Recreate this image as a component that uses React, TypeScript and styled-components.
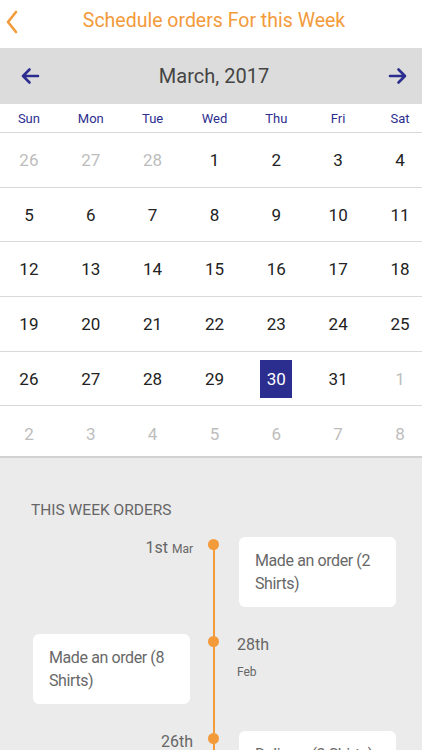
import { FC } from 'react';
import styled, { createGlobalStyle } from 'styled-components';

const GlobalStyle = createGlobalStyle`
  html, body {
    margin: 0;
    padding: 0;
    overflow: hidden;
    background: #ebebeb;
  }
  body {
    font-family: Roboto, 'Liberation Sans', sans-serif;
  }
`;

const ORANGE = '#f39a3b';
const NAVY = '#2c2e8f';

const Page = styled.div`
  display: flex;
  flex-direction: column;
  width: 422px;
  min-height: 100vh;
`;

const Header = styled.header`
  display: flex;
  align-items: center;
  justify-content: center;
  position: relative;
  height: 48px;
  padding-left: 6px;
  background: #fff;
`;

const BackButton = styled.button`
  position: absolute;
  left: 4px;
  top: 9px;
  display: flex;
  padding: 0;
  border: 0;
  background: none;
`;

const Title = styled.h1`
  margin: 0 0 7px;
  font-size: 19.5px;
  font-weight: 400;
  color: ${ORANGE};
`;

const MonthBar = styled.div`
  display: flex;
  align-items: center;
  justify-content: space-between;
  height: 56px;
  padding: 0 14px 0 20px;
  background: #dcdcdc;
`;

const MonthTitle = styled.span`
  font-size: 20px;
  color: #444;
`;

const NavArrow = styled.button`
  display: flex;
  padding: 0;
  border: 0;
  background: none;
`;

const Calendar = styled.div`
  overflow: hidden;
  background: #fff;
  border-bottom: 2px solid #d2d2d2;
`;

const WeekRow = styled.div<{ $height: number; $last?: boolean }>`
  display: grid;
  grid-template-columns: repeat(7, 61.85px);
  align-items: center;
  width: 433px;
  margin-left: -2px;
  height: ${({ $height }) => $height}px;
  border-bottom: ${({ $last }) => ($last ? 'none' : '1px solid #d9d9d9')};
  padding-top: ${({ $last }) => ($last ? 6 : 0)}px;
  box-sizing: ${({ $last }) => ($last ? 'border-box' : 'content-box')};
`;

const DayName = styled.span`
  justify-self: center;
  font-size: 13px;
  color: ${NAVY};
`;

const DayCell = styled.span<{ $muted?: boolean; $selected?: boolean }>`
  justify-self: center;
  display: flex;
  align-items: center;
  justify-content: center;
  width: 32px;
  height: 38px;
  font-size: 17px;
  color: ${({ $muted, $selected }) => ($selected ? '#fff' : $muted ? '#bdbdbd' : '#222')};
  background: ${({ $selected }) => ($selected ? NAVY : 'transparent')};
`;

const OrdersSection = styled.section`
  flex: 1;
  padding: 42px 0 0 31px;
  background: #ebebeb;
`;

const SectionTitle = styled.h2`
  margin: 0 0 17px;
  font-size: 15.5px;
  line-height: 20px;
  font-weight: 400;
  color: #666;
`;

const TimelineRow = styled.div`
  display: grid;
  grid-template-columns: 162px 44px 160px;
  align-items: start;
  min-height: 97px;
`;

const Axis = styled.div<{ $first?: boolean }>`
  position: relative;
  align-self: stretch;

  &::before {
    content: '';
    position: absolute;
    left: 20px;
    width: 2px;
    top: ${({ $first }) => ($first ? 7 : 0)}px;
    bottom: 0;
    background: ${ORANGE};
  }
  &::after {
    content: '';
    position: absolute;
    left: 15px;
    top: 2px;
    width: 11px;
    height: 11px;
    border-radius: 50%;
    background: ${ORANGE};
  }
`;

const DateLabel = styled.div<{ $side: 'left' | 'right' }>`
  text-align: ${({ $side }) => $side};
  color: #666;
`;

const DayNum = styled.span`
  font-size: 16px;
  line-height: 22px;
`;

const MonthShort = styled.span<{ $block?: boolean }>`
  display: ${({ $block }) => ($block ? 'block' : 'inline')};
  margin-top: ${({ $block }) => ($block ? 8 : 0)}px;
  margin-left: ${({ $block }) => ($block ? 0 : 4)}px;
  font-size: 12px;
  line-height: 16px;
`;

const OrderCard = styled.div`
  width: 157px;
  box-sizing: border-box;
  margin-left: 2px;
  padding: 12px 16px;
  border-radius: 6px;
  background: #fff;
  font-size: 16px;
  line-height: 23px;
  letter-spacing: -0.4px;
  color: #686868;
`;

const BackIcon = () => (
  <svg width="16" height="26" viewBox="0 0 16 26">
    <polyline points="12,3 4,13 12,23" fill="none" stroke={ORANGE} strokeWidth="2.6" strokeLinecap="round" strokeLinejoin="round" />
  </svg>
);

const ArrowIcon: FC<{ dir: 'left' | 'right' }> = ({ dir }) => (
  <svg width="20" height="18" viewBox="0 0 20 18" style={dir === 'right' ? { transform: 'scaleX(-1)' } : undefined}>
    <path d="M18 9H3M9.5 2.5L3 9l6.5 6.5" fill="none" stroke={NAVY} strokeWidth="2.6" strokeLinecap="round" strokeLinejoin="round" />
  </svg>
);

type Day = { n: number; muted?: boolean; selected?: boolean };

const weeks: Day[][] = [
  [{ n: 26, muted: true }, { n: 27, muted: true }, { n: 28, muted: true }, { n: 1 }, { n: 2 }, { n: 3 }, { n: 4 }],
  [5, 6, 7, 8, 9, 10, 11].map((n) => ({ n })),
  [12, 13, 14, 15, 16, 17, 18].map((n) => ({ n })),
  [19, 20, 21, 22, 23, 24, 25].map((n) => ({ n })),
  [{ n: 26 }, { n: 27 }, { n: 28 }, { n: 29 }, { n: 30, selected: true }, { n: 31 }, { n: 1, muted: true }],
  [2, 3, 4, 5, 6, 7, 8].map((n) => ({ n, muted: true })),
];

const dayNames = ['Sun', 'Mon', 'Tue', 'Wed', 'Thu', 'Fri', 'Sat'];

type Entry = { day: string; month: string; text: string; side: 'left' | 'right' };

const entries: Entry[] = [
  { day: '1st', month: 'Mar', text: 'Made an order (2 Shirts)', side: 'right' },
  { day: '28th', month: 'Feb', text: 'Made an order (8 Shirts)', side: 'left' },
  { day: '26th', month: 'Feb', text: 'Delivery (3 Shirts)', side: 'right' },
];

export default function App() {
  return (
    <Page>
      <GlobalStyle />
      <Header>
        <BackButton>
          <BackIcon />
        </BackButton>
        <Title>Schedule orders For this Week</Title>
      </Header>
      <MonthBar>
        <NavArrow>
          <ArrowIcon dir="left" />
        </NavArrow>
        <MonthTitle>March, 2017</MonthTitle>
        <NavArrow>
          <ArrowIcon dir="right" />
        </NavArrow>
      </MonthBar>
      <Calendar>
        <WeekRow $height={28}>
          {dayNames.map((d) => (
            <DayName key={d}>{d}</DayName>
          ))}
        </WeekRow>
        {weeks.map((week, i) => (
          <WeekRow key={i} $height={i === weeks.length - 1 ? 50 : 53.7} $last={i === weeks.length - 1}>
            {week.map((d, j) => (
              <DayCell key={j} $muted={d.muted} $selected={d.selected}>
                {d.n}
              </DayCell>
            ))}
          </WeekRow>
        ))}
      </Calendar>
      <OrdersSection>
        <SectionTitle>THIS WEEK ORDERS</SectionTitle>
        {entries.map((e, i) =>
          e.side === 'right' ? (
            <TimelineRow key={i}>
              <DateLabel $side="right">
                <DayNum>{e.day}</DayNum>
                {i === 0 && <MonthShort>{e.month}</MonthShort>}
              </DateLabel>
              <Axis $first={i === 0} />
              <OrderCard>{e.text}</OrderCard>
            </TimelineRow>
          ) : (
            <TimelineRow key={i}>
              <OrderCard>{e.text}</OrderCard>
              <Axis $first={i === 0} />
              <DateLabel $side="left">
                <DayNum>{e.day}</DayNum>
                <MonthShort $block>{e.month}</MonthShort>
              </DateLabel>
            </TimelineRow>
          ),
        )}
      </OrdersSection>
    </Page>
  );
}
